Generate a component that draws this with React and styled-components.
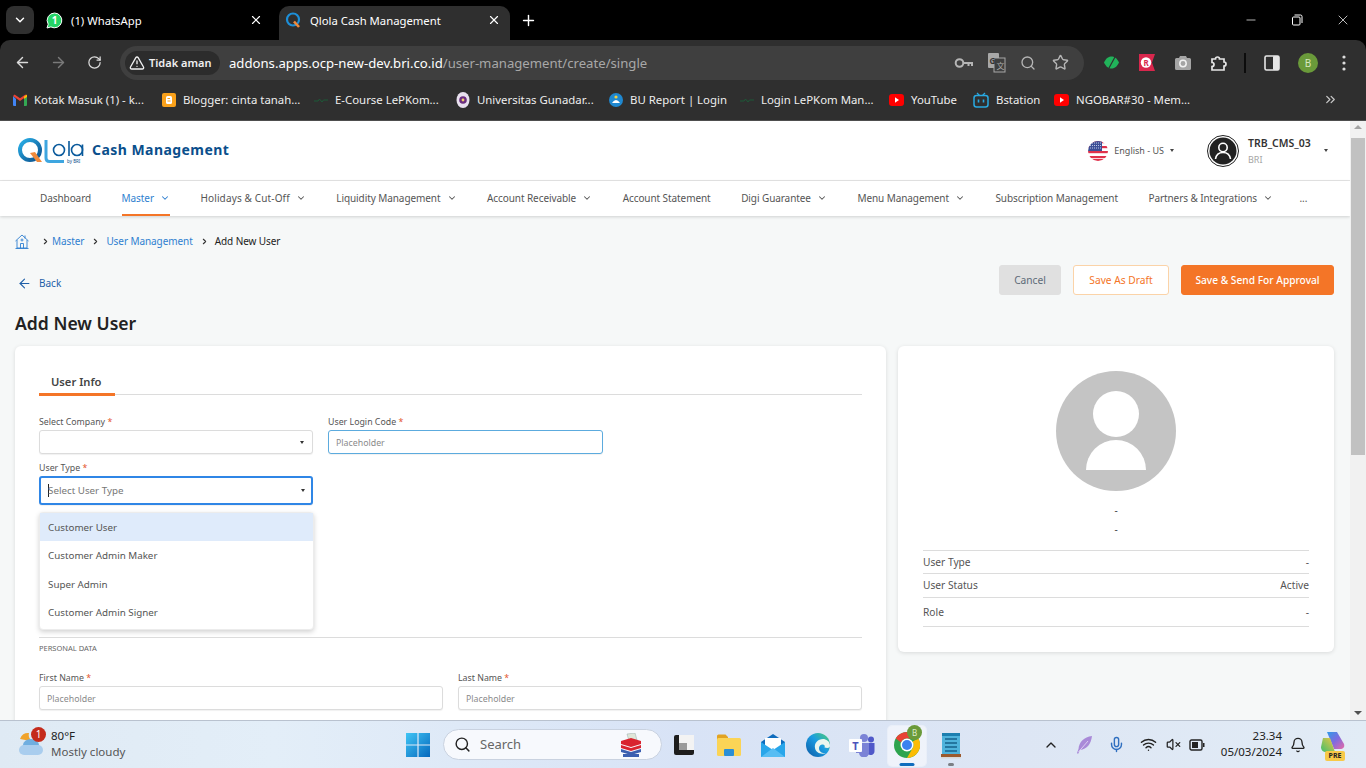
import React from 'react';
import styled, { createGlobalStyle } from 'styled-components';
import {
  ArrowLeft,
  ArrowRight,
  RotateCw,
  TriangleAlert,
  Search,
  Star,
  Plus,
  X,
  ChevronDown,
  ChevronRight,
  ChevronUp,
  ChevronsRight,
  Minus,
  Mic,
  Wifi,
  VolumeX,
  Bell,
} from 'lucide-react';

const GlobalStyle = createGlobalStyle`
  html, body {
    margin: 0;
    padding: 0;
    height: 100%;
    overflow: hidden;
    font-family: "Noto Sans", "Open Sans", sans-serif;
  }
  * { box-sizing: border-box; }
`;

const Screen = styled.div`
  width: 1366px;
  height: 768px;
  display: flex;
  flex-direction: column;
  overflow: hidden;
  background: #000;
`;

/* browser chrome */
const TabStrip = styled.div`
  height: 40px;
  background: #000;
  display: flex;
  align-items: flex-end;
  padding-left: 6px;
  color: #fff;
`;

const TabSearch = styled.div`
  width: 28px;
  height: 28px;
  margin-bottom: 6px;
  border-radius: 8px;
  background: #303030;
  display: flex;
  align-items: center;
  justify-content: center;
`;

const Tab = styled.div`
  width: ${(p) => p.$width}px;
  height: 34px;
  margin-left: ${(p) => p.$left}px;
  border-radius: 10px 10px 0 0;
  background: ${(p) => (p.$active ? '#2f2f2f' : 'transparent')};
  display: flex;
  align-items: center;
  padding: 0 ${(p) => p.$right}px 6px ${(p) => p.$pad}px;
  gap: 8px;
  font-size: 11.3px;
`;

const TabTitle = styled.span`
  flex: 1;
  white-space: nowrap;
`;

const NewTab = styled.div`
  width: 36px;
  height: 34px;
  display: flex;
  align-items: center;
  justify-content: center;
  padding-bottom: 6px;
`;

const WindowControls = styled.div`
  margin-left: auto;
  height: 40px;
  display: flex;
  align-items: center;
`;

const WindowButton = styled.div`
  width: 46px;
  display: flex;
  justify-content: center;
`;

const Toolbar = styled.div`
  height: 45px;
  background: #2f2f2f;
  border-radius: 10px 10px 0 0;
  display: flex;
  align-items: center;
  position: relative;
  padding-left: 4px;
  color: #e3e3e3;
`;

const NavIcon = styled.div`
  width: 36px;
  display: flex;
  justify-content: center;
  color: ${(p) => (p.$muted ? '#7a7a7a' : '#dcdcdc')};
`;

const Omnibox = styled.div`
  margin-left: 8px;
  width: 964px;
  height: 34px;
  border-radius: 17px;
  background: #3f3f3f;
  display: flex;
  align-items: center;
  padding: 0 15px 0 5px;
`;

const SecurityChip = styled.div`
  height: 24px;
  width: 95px;
  border-radius: 12px;
  background: #2c2c2c;
  display: flex;
  align-items: center;
  gap: 4px;
  padding-left: 4px;
  font-size: 11px;
  font-weight: 600;
  color: #f0f0f0;
  white-space: nowrap;
`;

const Url = styled.div`
  margin-left: 9px;
  padding-top: 1px;
  font-size: 13.15px;
  color: #fff;
  white-space: nowrap;
  span {
    color: #a8a8a8;
  }
`;

const OmniIcons = styled.div`
  margin-left: auto;
  display: flex;
  align-items: center;
  gap: 14px;
  color: #b5b5b5;
  svg:last-child {
    margin-left: 2px;
  }
`;

const Extensions = styled.div`
  margin-left: 9px;
  display: flex;
  align-items: center;
`;

const ExtSlot = styled.div`
  width: ${(p) => p.$width || 36}px;
  display: flex;
  justify-content: center;
  align-items: center;
  color: #c9c9c9;
`;

const ToolSep = styled.div`
  width: 2px;
  height: 20px;
  margin: 0 8px 0 7px;
  background: #0c0c0c;
`;

const Profile = styled.div`
  width: 20px;
  height: 20px;
  border-radius: 50%;
  background: #6a9a3a;
  color: #d8e8c0;
  font-size: 10px;
  display: flex;
  align-items: center;
  justify-content: center;
`;

const BookmarkBar = styled.div`
  height: 36px;
  background: #2f2f2f;
  border-bottom: 1px solid #4e4e4e;
  display: flex;
  align-items: center;
  padding: 0 0 6px 13px;
  color: #eee;
  font-size: 11.4px;
`;

const Bookmark = styled.div`
  width: ${(p) => p.$width}px;
  flex: none;
  display: flex;
  align-items: center;
  gap: 7px;
  white-space: nowrap;
`;

const BookmarkMore = styled.div`
  margin-left: auto;
  margin-right: 28px;
  display: flex;
  color: #c8c8c8;
`;

/* page */
const Viewport = styled.div`
  flex: 1;
  min-height: 0;
  display: flex;
  overflow: hidden;
`;

const Page = styled.div`
  width: 1350px;
  background: #f6f8f8;
  overflow: hidden;
  color: #333;
`;

const Scrollbar = styled.div`
  width: 16px;
  background: #f1f1f1;
  display: flex;
  flex-direction: column;
  align-items: center;
  padding-top: 4px;
`;

const ScrollArrow = styled.div`
  width: 0;
  height: 0;
  border-left: 4px solid transparent;
  border-right: 4px solid transparent;
  ${(p) =>
    p.$down
      ? 'border-top: 4px solid #505050; margin-top: auto; margin-bottom: 5px;'
      : 'border-bottom: 4px solid #a3a3a3;'}
`;

const ScrollThumb = styled.div`
  width: 14px;
  height: 317px;
  margin-top: 9px;
  background: #c1c1c1;
`;

const Header = styled.header`
  height: 60px;
  background: #fff;
  border-bottom: 1px solid #e6e6e6;
  display: flex;
  align-items: center;
  padding-left: 17px;
`;

const LogoTitle = styled.div`
  margin-left: 8px;
  padding-bottom: 2px;
  font-size: 14px;
  font-weight: 700;
  letter-spacing: 0.45px;
  color: #0a4f8c;
`;

const LangPick = styled.div`
  margin-left: auto;
  display: flex;
  align-items: center;
  font-size: 9px;
  color: #555;
  gap: 6px;
`;

const Caret = styled.span`
  display: inline-block;
  width: 0;
  height: 0;
  border-left: 2.5px solid transparent;
  border-right: 2.5px solid transparent;
  border-top: 3px solid ${(p) => p.$color || '#444'};
`;

const UserBox = styled.div`
  margin-left: 33px;
  margin-right: 22px;
  display: flex;
  align-items: center;
`;

const UserText = styled.div`
  margin: 0 11px 0 9px;
  width: 65px;
  padding-top: 2px;
`;

const UserName = styled.div`
  font-size: 10.5px;
  font-weight: 600;
  color: #333;
  line-height: 14px;
`;

const UserOrg = styled.div`
  font-size: 9px;
  color: #a5a5a5;
  line-height: 14px;
  margin-top: 3px;
`;

const Nav = styled.nav`
  height: 35px;
  background: #fff;
  box-shadow: 0 1px 3px rgba(0, 0, 0, 0.16);
  display: flex;
  align-items: stretch;
  padding-left: 40px;
  gap: 30.5px;
  position: relative;
`;

const NavItem = styled.div`
  display: flex;
  align-items: center;
  gap: 6px;
  margin-left: ${(p) => p.$pull || 0}px;
  font-size: 10px;
  letter-spacing: ${(p) => p.$spacing ?? -0.08}px;
  white-space: nowrap;
  color: ${(p) => (p.$active ? '#2f7fd0' : '#555')};
  border-bottom: 2px solid ${(p) => (p.$active ? '#f47527' : 'transparent')};
`;

const Content = styled.main`
  padding: 15px 16px 0 15px;
`;

const Breadcrumb = styled.div`
  height: 20px;
  display: flex;
  align-items: center;
  font-size: 10px;
  letter-spacing: -0.08px;
  color: #2f7fd0;
`;

const CrumbSep = styled.span`
  display: flex;
  margin: 0 ${(p) => p.$right}px 0 ${(p) => p.$left}px;
  color: #333;
`;

const CrumbCurrent = styled.span`
  color: #222;
`;

const ActionRow = styled.div`
  margin-top: 14px;
  height: 30px;
  display: flex;
  align-items: center;
`;

const BackLink = styled.div`
  display: flex;
  align-items: center;
  gap: 7px;
  margin-top: 6px;
  padding-left: 2px;
  font-size: 10px;
  color: #1f5fa8;
`;

const Buttons = styled.div`
  margin-left: auto;
  display: flex;
  gap: 12px;
`;

const Button = styled.button`
  width: ${(p) => p.$width}px;
  height: 30px;
  padding: 0;
  border-radius: 3px;
  font-family: inherit;
  font-size: 10.2px;
  font-weight: ${(p) => (p.$variant === 'primary' ? 500 : 400)};
  border: 1px solid
    ${(p) =>
      p.$variant === 'primary'
        ? '#f47527'
        : p.$variant === 'draft'
          ? '#fbd3a8'
          : '#e0e0e0'};
  background: ${(p) =>
    p.$variant === 'primary'
      ? '#f47527'
      : p.$variant === 'draft'
        ? '#fff'
        : '#e0e0e0'};
  color: ${(p) =>
    p.$variant === 'primary'
      ? '#fff'
      : p.$variant === 'draft'
        ? '#f47527'
        : '#5d6b78'};
`;

const Title = styled.h1`
  margin: 17px 0 0;
  font-size: 17.6px;
  line-height: 22px;
  font-weight: 600;
  color: #222;
`;

const Columns = styled.div`
  margin-top: 12px;
  display: grid;
  grid-template-columns: 871px 436px;
  gap: 12px;
  align-items: start;
`;

const Card = styled.section`
  background: #fff;
  border-radius: 6px;
  box-shadow: 0 1px 4px rgba(0, 0, 0, 0.12);
`;

const FormCard = styled(Card)`
  height: 420px;
  padding: 24px 24px 0;
`;

const TabBar = styled.div`
  height: 25px;
  border-bottom: 1px solid #dcdcdc;
`;

const TabLabel = styled.div`
  width: 76px;
  height: 26px;
  border-bottom: 3px solid #f47527;
  padding-left: 12px;
  font-size: 11.2px;
  font-weight: 600;
  line-height: 23px;
  color: #444;
`;

const FieldRow = styled.div`
  display: grid;
  grid-template-columns: ${(p) => p.$cols};
  column-gap: 15px;
  margin-top: ${(p) => p.$top || 0}px;
`;

const Field = styled.div`
  position: relative;
`;

const Label = styled.label`
  display: block;
  height: 12px;
  margin-bottom: 2px;
  font-size: 8.8px;
  line-height: 12px;
  color: #555;
  em {
    font-style: normal;
    color: #e4572e;
  }
`;

const Input = styled.div`
  height: ${(p) => p.$height || 24}px;
  border-radius: 3px;
  border: ${(p) =>
    p.$focus === 'strong'
      ? '2px solid #2f86e6'
      : p.$focus === 'soft'
        ? '1px solid #5cabde'
        : '1px solid #dcdcdc'};
  background: #fff;
  display: flex;
  align-items: center;
  justify-content: space-between;
  padding: ${(p) => (p.$focus === 'strong' ? 0 : 1)}px
    ${(p) => (p.$focus === 'strong' ? 6 : 8)}px 0 7px;
  font-size: 8.8px;
  color: #8a8a8a;
  box-shadow: 0 1px 1px rgba(0, 0, 0, 0.06);
`;

const SelectText = styled.span`
  font-size: 9.8px;
  color: #777;
  display: flex;
  align-items: center;
`;

const TextCaret = styled.i`
  width: 1px;
  height: 13px;
  background: #222;
  margin-right: -1px;
`;

const Dropdown = styled.ul`
  position: absolute;
  z-index: 5;
  top: 50px;
  left: 0;
  width: 275px;
  height: 118px;
  margin: 0;
  padding: 0;
  list-style: none;
  background: #fff;
  border-radius: 4px;
  border: 1px solid #ececec;
  box-shadow: 0 2px 5px rgba(0, 0, 0, 0.18);
`;

const Option = styled.li`
  height: ${(p) => p.$height}px;
  padding-left: 8px;
  display: flex;
  align-items: center;
  font-size: 9.8px;
  color: #555;
  background: ${(p) => (p.$active ? '#dfebfb' : 'transparent')};
`;

const SectionHead = styled.div`
  margin-top: 132px;
  border-top: 1px solid #dcdcdc;
  padding-top: 5px;
  font-size: 7.5px;
  line-height: 10px;
  color: #666;
`;

const SideCard = styled(Card)`
  height: 306px;
  padding: 25px 25px 0;
`;

const AvatarWrap = styled.div`
  display: flex;
  justify-content: center;
`;

const Dash = styled.div`
  text-align: center;
  font-size: 10px;
  line-height: 14px;
  margin-top: ${(p) => p.$top}px;
  color: #444;
`;

const InfoTable = styled.div`
  margin-top: 14px;
  border-top: 1px solid #dcdcdc;
`;

const InfoRow = styled.div`
  height: ${(p) => p.$height}px;
  padding-bottom: ${(p) => p.$lift || 0}px;
  border-bottom: 1px solid #dcdcdc;
  display: flex;
  justify-content: space-between;
  align-items: center;
  font-size: 10.2px;
  color: #555;
`;

/* taskbar */
const Taskbar = styled.footer`
  height: 48px;
  border-top: 1px solid #b9c2cf;
  background: linear-gradient(90deg, #dfeaf4 0%, #e3eef8 20%, #d8e3f6 50%, #dde6f4 75%, #e2ecf6 100%);
  display: flex;
  align-items: center;
  position: relative;
`;

const Weather = styled.div`
  width: 406px;
  padding-left: 18px;
  padding-bottom: 2px;
  display: flex;
  align-items: center;
  gap: 7px;
  font-size: 11.5px;
  line-height: 16px;
  color: #222;
`;

const WeatherIcon = styled.div`
  position: relative;
  width: 26px;
  height: 28px;
`;

const Badge = styled.span`
  position: absolute;
  top: -3px;
  right: -2px;
  width: 15px;
  height: 15px;
  border-radius: 50%;
  background: #c42b1c;
  color: #fff;
  font-size: 10px;
  line-height: 15px;
  text-align: center;
`;

const WeatherMuted = styled.div`
  color: #555;
`;

const SearchPill = styled.div`
  margin-left: 13px;
  width: 219px;
  height: 31px;
  border-radius: 16px;
  background: #f7f9fd;
  border: 1px solid #c9d2e0;
  display: flex;
  align-items: center;
  padding: 0 19px 0 10px;
  gap: 9px;
  font-size: 13px;
  color: #666;
`;

const PillText = styled.span`
  padding-bottom: 2px;
`;

const PillArt = styled.div`
  margin-left: auto;
  display: flex;
`;

const AppSlot = styled.div`
  width: 44.5px;
  height: 44px;
  flex: none;
  display: flex;
  align-items: center;
  justify-content: center;
  position: relative;
  ${(p) =>
    p.$active &&
    `&::before {
      content: '';
      position: absolute;
      left: 3px;
      right: 3px;
      top: 3px;
      bottom: 1px;
      border-radius: 4px;
      background: rgba(255, 255, 255, 0.55);
      box-shadow: 0 0 0 1px rgba(255, 255, 255, 0.4);
    }`}
  svg {
    position: relative;
  }
`;

const RunningMark = styled.i`
  position: absolute;
  bottom: 1px;
  left: 50%;
  transform: translateX(-50%);
  height: 3px;
  width: ${(p) => (p.$active ? 15 : 6)}px;
  border-radius: 2px;
  background: ${(p) => (p.$active ? '#0f6cbd' : '#7b7f85')};
`;

const ChromeBadge = styled.span`
  position: absolute;
  top: 2px;
  right: 7px;
  width: 15px;
  height: 15px;
  border-radius: 50%;
  background: #6a9a3a;
  color: #dfeccb;
  font-size: 8px;
  line-height: 15px;
  text-align: center;
`;

const Tray = styled.div`
  margin-left: auto;
  display: flex;
  align-items: center;
  color: #222;
`;

const TraySlot = styled.div`
  width: ${(p) => p.$width}px;
  display: flex;
  justify-content: center;
  color: ${(p) => p.$color || '#222'};
`;

const Clock = styled.div`
  width: 69px;
  padding-bottom: 2px;
  text-align: right;
  font-size: 11.5px;
  line-height: 16px;
  color: #222;
`;

const CopilotWrap = styled.div`
  position: relative;
  margin: 0 20px 0 6px;
  width: 26px;
  height: 30px;
`;

const PreTag = styled.span`
  position: absolute;
  left: 5px;
  bottom: -1px;
  width: 20px;
  height: 10px;
  border-radius: 2px;
  background: #f7c948;
  color: #222;
  font-size: 7px;
  font-weight: 700;
  line-height: 10px;
  text-align: center;
`;

/* drawn icons */
const WhatsappIcon = () => (
  <svg width="17" height="17" viewBox="0 0 17 17">
    <path d="M8.5 1a7.4 7.4 0 0 0-6.300 11.200L1 16l3.900-1.100A7.400 7.400 0 1 0 8.500 1z" fill="#25d366" stroke="#fff" strokeWidth="1" />
    <text x="8.5" y="12" fontSize="10" fontFamily="Noto Sans" textAnchor="middle" fill="#fff" fontWeight="700">1</text>
  </svg>
);

const QIcon = () => (
  <svg width="17" height="17" viewBox="0 0 17 17" fill="none">
    <circle cx="8" cy="7.5" r="6" stroke="#1d8fd8" strokeWidth="2.2" />
    <path d="M9 9.5l5 5.5" stroke="#f08a3c" strokeWidth="2.6" />
  </svg>
);

const QlolaLogo = () => (
  <svg width="67" height="26" viewBox="0 0 67 26" fill="none">
    <defs>
      <linearGradient id="qg" x1="0" y1="0" x2="1" y2="1">
        <stop offset="0" stopColor="#2ab0e8" />
        <stop offset="1" stopColor="#0a4f8c" />
      </linearGradient>
    </defs>
    <circle cx="13" cy="12" r="10" stroke="url(#qg)" strokeWidth="4" />
    <path d="M29 2v18q0 3.500 3.500 3.500H47" stroke="#3ea6e0" strokeWidth="3" />
    <path d="M13 15l7 9h5l-7-10z" fill="#f08a3c" />
    <circle cx="42" cy="12" r="5.500" stroke="#0a5a9c" strokeWidth="1.600" />
    <path d="M52 3v15" stroke="#0a5a9c" strokeWidth="1.600" />
    <circle cx="60" cy="12" r="5.500" stroke="#0a5a9c" strokeWidth="1.600" />
    <path d="M65.500 6.500V18" stroke="#0a5a9c" strokeWidth="1.600" />
    <text x="50" y="25" fontSize="4.500" fontFamily="Noto Sans" fill="#0a4f8c">by BRI</text>
  </svg>
);

const KeyIcon = () => (
  <svg width="20" height="14" viewBox="0 0 20 14" fill="none" stroke="currentColor" strokeWidth="2">
    <circle cx="5.500" cy="7" r="3.800" />
    <path d="M9.500 7H18v3M14.500 7v3" />
  </svg>
);

const TranslateIcon = () => (
  <svg width="18" height="20" viewBox="0 0 18 20">
    <rect x="0" y="0" width="11" height="15" rx="1" fill="#a8a8a8" />
    <rect x="6" y="5" width="11" height="14" fill="#3f3f3f" stroke="#a8a8a8" />
    <text x="1.500" y="11" fontSize="8" fontWeight="700" fontFamily="Noto Sans" fill="#333">G</text>
    <text x="8.500" y="16" fontSize="8" fontFamily="Noto Sans CJK SC" fill="#a8a8a8">文</text>
  </svg>
);

const LeafIcon = () => (
  <svg width="17" height="15" viewBox="0 0 17 15">
    <path d="M1 7.500C3 3 6 1.500 8.500 1.500S14 3 16 7.500C14 12 11 13.500 8.500 13.500S3 12 1 7.500z" fill="#21b35a" />
    <path d="M6 13L12 2" stroke="#2f2f2f" strokeWidth="1.200" />
  </svg>
);

const RedExtIcon = () => (
  <svg width="16" height="17" viewBox="0 0 16 17">
    <path d="M0 0h16l-3 8.500 3 8.500H0z" fill="#d8274d" />
    <circle cx="7" cy="8.500" r="5.200" fill="#fff" />
    <text x="7" y="11.500" fontSize="8" fontWeight="700" textAnchor="middle" fontFamily="Noto Sans" fill="#d8274d">R</text>
  </svg>
);

const CameraIcon = () => (
  <svg width="16" height="15" viewBox="0 0 16 15">
    <path d="M5 1h6l1 2h2.500A1.500 1.500 0 0 1 16 4.500v9a1.500 1.500 0 0 1-1.500 1.500h-13A1.500 1.500 0 0 1 0 13.500v-9A1.500 1.500 0 0 1 1.500 3H4z" fill="#a5a5a5" />
    <circle cx="8" cy="8.500" r="3.200" fill="none" stroke="#f2f2f2" strokeWidth="1.500" />
  </svg>
);

const PuzzleIcon = () => (
  <svg width="18" height="18" viewBox="0 0 18 18" fill="none" stroke="#e6e6e6" strokeWidth="1.700">
    <path d="M2 5h3.500a2 2 0 1 1 4 0H14v3a2 2 0 1 1 0 4v4H2v-3.500a2 2 0 0 0 0-4z" />
  </svg>
);

const PanelIcon = () => (
  <svg width="16" height="16" viewBox="0 0 16 16">
    <rect x="1" y="1" width="14" height="14" rx="1.500" fill="none" stroke="#e6e6e6" strokeWidth="1.600" />
    <rect x="9" y="1" width="6" height="14" rx="1" fill="#e6e6e6" />
  </svg>
);

const MenuDots = () => (
  <svg width="4" height="16" viewBox="0 0 4 16" fill="#dcdcdc">
    <circle cx="2" cy="2" r="1.600" />
    <circle cx="2" cy="8" r="1.600" />
    <circle cx="2" cy="14" r="1.600" />
  </svg>
);

const GmailIcon = () => (
  <svg width="14" height="12" viewBox="0 0 14 12">
    <path d="M0 2v9a1 1 0 0 0 1 1h2V5z" fill="#4285f4" />
    <path d="M14 2v9a1 1 0 0 1-1 1h-2V5z" fill="#34a853" />
    <path d="M0 2l7 5 7-5-1.600-1.600L7 4.200 1.600.4z" fill="#ea4335" />
    <path d="M11 2.400L14 .6V3l-3 2z" fill="#fbbc04" />
  </svg>
);

const BloggerIcon = () => (
  <svg width="14" height="14" viewBox="0 0 14 14">
    <rect width="14" height="14" rx="2" fill="#f9a11b" />
    <rect x="4" y="3" width="6" height="8" rx="1.500" fill="#fff" />
    <rect x="5.500" y="5" width="2.500" height="1" fill="#f9a11b" />
    <rect x="5.500" y="7.500" width="3" height="1" fill="#f9a11b" />
  </svg>
);

const LepkomIcon = () => (
  <svg width="14" height="6" viewBox="0 0 14 6" fill="none">
    <path d="M0 4h4l1.500-2L8 5l1.500-2H14" stroke="#1d5a38" strokeWidth="1" />
  </svg>
);

const CampusIcon = () => (
  <svg width="14" height="16" viewBox="0 0 14 16">
    <ellipse cx="7" cy="8" rx="6.500" ry="8" fill="#e8e0ee" />
    <circle cx="7" cy="8" r="3.800" fill="#6b2d7f" />
    <circle cx="7" cy="8" r="1.400" fill="#f0d36a" />
  </svg>
);

const TutWuriIcon = () => (
  <svg width="14" height="16" viewBox="0 0 14 16">
    <circle cx="7" cy="8" r="7" fill="#1f88d0" />
    <path d="M3 11q4-6 8 0z" fill="#fff" />
    <circle cx="7" cy="5" r="1.600" fill="#f3d03e" />
  </svg>
);

const YoutubeIcon = () => (
  <svg width="15" height="12" viewBox="0 0 15 12">
    <rect width="15" height="12" rx="3" fill="#f00" />
    <path d="M6 3.300l4 2.700-4 2.700z" fill="#fff" />
  </svg>
);

const BstationIcon = () => (
  <svg width="16" height="16" viewBox="0 0 16 16" fill="none">
    <rect x="1" y="3.500" width="14" height="11.500" rx="2.500" stroke="#29a9e1" strokeWidth="1.500" />
    <path d="M4 1l2.500 2.500M12 1L9.500 3.500" stroke="#29a9e1" strokeWidth="1.300" />
    <path d="M5.500 7.500v3M10.500 7.500v3" stroke="#29a9e1" strokeWidth="1.600" />
  </svg>
);

const FlagIcon = () => (
  <svg width="20" height="20" viewBox="0 0 20 20">
    <defs>
      <clipPath id="flagclip">
        <circle cx="10" cy="10" r="10" />
      </clipPath>
    </defs>
    <g clipPath="url(#flagclip)">
      <rect width="20" height="20" fill="#fff" />
      <rect y="0" width="20" height="2.200" fill="#e0314b" />
      <rect y="5" width="20" height="2.200" fill="#e0314b" />
      <rect y="10" width="20" height="2.200" fill="#e0314b" />
      <rect y="15" width="20" height="2.200" fill="#e0314b" />
      <rect y="18" width="20" height="2" fill="#e0314b" />
      <rect width="14" height="10" fill="#3d4f97" />
      <path d="M2 2h11M2 4.500h11M2 7h11" stroke="#cfd6ee" strokeWidth="0.900" strokeDasharray="1 1" />
    </g>
  </svg>
);

const AccountIcon = () => (
  <svg width="32" height="32" viewBox="0 0 32 32">
    <circle cx="16" cy="16" r="15.500" fill="#fff" stroke="#222" strokeWidth="1" />
    <circle cx="16" cy="16" r="13.500" fill="#222" />
    <circle cx="16" cy="12.500" r="4.200" fill="none" stroke="#fff" strokeWidth="1.600" />
    <path d="M8.500 24q1-6.500 7.500-6.500T23.500 24" fill="none" stroke="#fff" strokeWidth="1.600" />
  </svg>
);

const HomeIcon = () => (
  <svg width="14" height="15" viewBox="0 0 14 15" fill="none" stroke="#2f7fd0" strokeWidth="0.900">
    <path d="M0.500 7L7 1l6.500 6M2 6v8h10V6M0.500 14.500h13" />
    <path d="M5.500 14V9.500h3V14M10 1.500v3" />
    <circle cx="7" cy="6" r="1" />
  </svg>
);

const BigAvatar = () => (
  <svg width="120" height="120" viewBox="0 0 120 120">
    <circle cx="60" cy="60" r="60" fill="#c4c4c4" />
    <circle cx="60" cy="43" r="23" fill="#fff" />
    <path d="M30 99a30 30 0 0 1 60 0z" fill="#fff" />
  </svg>
);

const CloudIcon = () => (
  <svg width="26" height="28" viewBox="0 0 26 28">
    <path d="M2 9a8 8 0 0 1 9-6 7 7 0 0 0 7 9z" fill="#f0a32b" />
    <ellipse cx="13" cy="15" rx="8" ry="6" fill="#6faee0" />
    <rect x="1" y="15" width="24" height="10" rx="5" fill="#a9cdee" />
  </svg>
);

const WinLogo = () => (
  <svg width="24" height="24" viewBox="0 0 24 24">
    <defs>
      <linearGradient id="wing" x1="0" y1="0" x2="1" y2="1">
        <stop offset="0" stopColor="#3fc5f5" />
        <stop offset="1" stopColor="#0668bd" />
      </linearGradient>
    </defs>
    <path d="M0 0h11.400v11.400H0zM12.600 0H24v11.400H12.600zM0 12.600h11.400V24H0zM12.600 12.600H24V24H12.600z" fill="url(#wing)" />
  </svg>
);

const BallotBox = () => (
  <svg width="22" height="24" viewBox="0 0 22 24">
    <path d="M7 1l8-1 2 7-8 1z" fill="#dfe6d8" stroke="#9aa" strokeWidth=".5" />
    <path d="M1 8l10-3 10 3v3l-10 3-10-3z" fill="#d9232e" />
    <path d="M1 12l10 3 10-3v3l-10 3-10-3z" fill="#d9232e" />
    <path d="M1 16l10 3 10-3v3l-10 3-10-3z" fill="#3b5fb0" />
    <path d="M3 21h16v3H3z" fill="#3b5fb0" />
  </svg>
);

const DarkApp = () => (
  <svg width="22" height="22" viewBox="0 0 22 22">
    <rect x="1" y="1" width="20" height="20" rx="2" fill="#1d1d1d" />
    <rect x="6" y="1" width="15" height="15" fill="#f3f3f3" />
    <rect x="6" y="9" width="8" height="7" fill="#9a9a9a" />
  </svg>
);

const FolderIcon = () => (
  <svg width="24" height="24" viewBox="0 0 24 24">
    <path d="M0 3a1.500 1.500 0 0 1 1.500-1.500h7L11 4v3H0z" fill="#e2a322" />
    <rect x="0" y="5" width="24" height="18" rx="1.500" fill="#fbd456" />
    <rect x="7" y="16" width="10" height="7" rx="1" fill="#2b8fd6" />
  </svg>
);

const MailIcon = () => (
  <svg width="24" height="24" viewBox="0 0 24 24">
    <path d="M0 9l12-8 12 8v14H0z" fill="#0f6cbd" />
    <path d="M4 5h16v13H4z" fill="#fff" />
    <path d="M0 9l12 8 12-8v15H0z" fill="#29a6ea" />
    <path d="M0 24l12-9 12 9z" fill="#57bdf3" />
  </svg>
);

const EdgeIcon = () => (
  <svg width="24" height="24" viewBox="0 0 24 24">
    <defs>
      <linearGradient id="edg" x1="0" y1="1" x2="1" y2="0">
        <stop offset="0" stopColor="#0c59a4" />
        <stop offset="0.55" stopColor="#1b9de2" />
        <stop offset="1" stopColor="#51cf6e" />
      </linearGradient>
    </defs>
    <circle cx="12" cy="12" r="12" fill="url(#edg)" />
    <path d="M24 13c0-5-4-7-7-7-5 0-9 4-8 9 .7 4 5 7 11 5-5 .5-7-2-7-5 0-2 2-4 4-3.500 2 .5 2 2 1.500 3 3 1 5.500 .5 5.500-1.500z" fill="#eaf7ef" />
  </svg>
);

const TeamsIcon = () => (
  <svg width="26" height="24" viewBox="0 0 26 24">
    <circle cx="15" cy="5" r="4" fill="#7b83d6" />
    <circle cx="22" cy="6.500" r="3" fill="#5059c9" />
    <path d="M18 10h7.500v8a4 4 0 0 1-7.500 2z" fill="#5059c9" />
    <path d="M7 10h13v9a5 5 0 0 1-10 1H7z" fill="#7b83d6" />
    <rect x="0" y="6" width="13" height="13" rx="1" fill="#fff" />
    <text x="6.500" y="16.500" fontSize="11" fontWeight="700" fontFamily="Noto Sans" textAnchor="middle" fill="#4b53bc">T</text>
  </svg>
);

const ChromeIcon = () => (
  <svg width="26" height="26" viewBox="0 0 26 26">
    <circle cx="13" cy="13" r="13" fill="#2da44e" />
    <path d="M13 0a13 13 0 0 1 11.300 6.500H13A6.500 6.500 0 0 0 7 10.500L1.800 6.500A13 13 0 0 1 13 0z" fill="#e94235" />
    <path d="M24.300 6.500A13 13 0 0 1 13 26l5.700-10A6.500 6.500 0 0 0 18.500 9.500z" fill="#fbbc04" />
    <circle cx="13" cy="13" r="6.500" fill="#fff" />
    <circle cx="13" cy="13" r="5" fill="#3b82f0" />
  </svg>
);

const NotesIcon = () => (
  <svg width="20" height="28" viewBox="0 0 20 28">
    <rect x="1" y="2" width="18" height="21" fill="#4fb3dc" />
    <path d="M1 2h18v3H1z" fill="#1c7fb0" />
    <path d="M4 8h12M4 12h12M4 16h12M4 20h12" stroke="#17638c" strokeWidth="1.500" />
    <rect x="0" y="23" width="20" height="3" fill="#9b5a2e" />
    <rect x="0" y="26" width="20" height="1.500" fill="#d8d8d8" />
  </svg>
);

const FeatherIcon = () => (
  <svg width="16" height="18" viewBox="0 0 16 18">
    <path d="M15 0C7 1 2 6 1.500 13L0 17l1 1 2-4c7-1 11-6 12-14z" fill="#a98ad8" />
    <path d="M1.500 16L11 5" stroke="#e9def8" strokeWidth=".8" />
  </svg>
);

const BatteryIcon = () => (
  <svg width="16" height="12" viewBox="0 0 16 12">
    <rect x="1" y="1" width="12" height="10" rx="1.500" fill="none" stroke="#222" strokeWidth="1.400" />
    <rect x="3" y="3" width="6" height="6" fill="#222" />
    <rect x="14" y="4" width="1.500" height="4" fill="#222" />
  </svg>
);

const CopilotIcon = () => (
  <svg width="26" height="24" viewBox="0 0 26 24">
    <defs>
      <linearGradient id="cop" x1="0" y1="0" x2="1" y2="1">
        <stop offset="0" stopColor="#2f9be8" />
        <stop offset="0.5" stopColor="#7f6be0" />
        <stop offset="1" stopColor="#e86aa5" />
      </linearGradient>
      <linearGradient id="cop2" x1="0" y1="1" x2="1" y2="0">
        <stop offset="0" stopColor="#3fbf6c" />
        <stop offset="1" stopColor="#f5c644" />
      </linearGradient>
    </defs>
    <path d="M7 2h10l7 12c1 3-1 5-4 5h-6z" fill="url(#cop)" />
    <path d="M3 8h7l5 14H6c-3 0-5-2-5-5z" fill="url(#cop2)" />
  </svg>
);

const FieldCaret = () => <Caret $color="#333" />;

const CrumbArrow = () => <ChevronRight size={9} strokeWidth={3} />;

const bookmarks = [
  { icon: <GmailIcon />, label: 'Kotak Masuk (1) - k...', width: 149 },
  { icon: <BloggerIcon />, label: 'Blogger: cinta tanah...', width: 152 },
  { icon: <LepkomIcon />, label: 'E-Course LePKom...', width: 142 },
  { icon: <CampusIcon />, label: 'Universitas Gunadar...', width: 153 },
  { icon: <TutWuriIcon />, label: 'BU Report | Login', width: 131 },
  { icon: <LepkomIcon />, label: 'Login LePKom Man...', width: 149 },
  { icon: <YoutubeIcon />, label: 'YouTube', width: 84 },
  { icon: <BstationIcon />, label: 'Bstation', width: 81 },
  { icon: <YoutubeIcon />, label: 'NGOBAR#30 - Mem...', width: 150 },
];

const navItems = [
  { label: 'Dashboard' },
  { label: 'Master', menu: true, active: true },
  { label: 'Holidays & Cut-Off', menu: true, spacing: 0.14 },
  { label: 'Liquidity Management', menu: true },
  { label: 'Account Receivable', menu: true },
  { label: 'Account Statement' },
  { label: 'Digi Guarantee', menu: true },
  { label: 'Menu Management', menu: true },
  { label: 'Subscription Management' },
  { label: 'Partners & Integrations', menu: true },
  { label: '...', pull: -4 },
];

export default function App() {
  return (
    <Screen>
      <GlobalStyle />
      <TabStrip>
        <TabSearch>
          <ChevronDown size={14} color="#fff" strokeWidth={2.5} />
        </TabSearch>
        <Tab $width={240} $left={4} $pad={8} $right={15}>
          <WhatsappIcon />
          <TabTitle>(1) WhatsApp</TabTitle>
          <X size={14} />
        </Tab>
        <Tab $width={231} $left={1} $pad={6} $right={9} $active>
          <QIcon />
          <TabTitle>Qlola Cash Management</TabTitle>
          <X size={14} />
        </Tab>
        <NewTab>
          <Plus size={17} />
        </NewTab>
        <WindowControls>
          <WindowButton>
            <Minus size={14} strokeWidth={1.2} />
          </WindowButton>
          <WindowButton>
            <svg width="12" height="12" viewBox="0 0 12 12" fill="none" stroke="#fff">
              <rect x="1.500" y="3" width="7.500" height="8" rx="1" />
              <path d="M3.500 1h6a1.500 1.500 0 0 1 1.500 1.500V9" />
            </svg>
          </WindowButton>
          <WindowButton>
            <X size={16} strokeWidth={1.1} />
          </WindowButton>
        </WindowControls>
      </TabStrip>

      <Toolbar>
        <NavIcon>
          <ArrowLeft size={17} strokeWidth={2} />
        </NavIcon>
        <NavIcon $muted>
          <ArrowRight size={17} strokeWidth={2} />
        </NavIcon>
        <NavIcon>
          <RotateCw size={15} strokeWidth={2} />
        </NavIcon>
        <Omnibox>
          <SecurityChip>
            <TriangleAlert size={16} strokeWidth={2} />
            Tidak aman
          </SecurityChip>
          <Url>
            addons.apps.ocp-new-dev.bri.co.id<span>/user-management/create/single</span>
          </Url>
          <OmniIcons>
            <KeyIcon />
            <TranslateIcon />
            <Search size={16} strokeWidth={2} />
            <Star size={17} strokeWidth={2} />
          </OmniIcons>
        </Omnibox>
        <Extensions>
          <ExtSlot>
            <LeafIcon />
          </ExtSlot>
          <ExtSlot>
            <RedExtIcon />
          </ExtSlot>
          <ExtSlot>
            <CameraIcon />
          </ExtSlot>
          <ExtSlot>
            <PuzzleIcon />
          </ExtSlot>
          <ToolSep />
          <ExtSlot>
            <PanelIcon />
          </ExtSlot>
          <ExtSlot>
            <Profile>B</Profile>
          </ExtSlot>
          <ExtSlot>
            <MenuDots />
          </ExtSlot>
        </Extensions>
      </Toolbar>

      <BookmarkBar>
        {bookmarks.map((b) => (
          <Bookmark key={b.label} $width={b.width}>
            {b.icon}
            {b.label}
          </Bookmark>
        ))}
        <BookmarkMore>
          <ChevronsRight size={15} />
        </BookmarkMore>
      </BookmarkBar>

      <Viewport>
        <Page>
          <Header>
            <QlolaLogo />
            <LogoTitle>Cash Management</LogoTitle>
            <LangPick>
              <FlagIcon />
              English - US
              <Caret />
            </LangPick>
            <UserBox>
              <AccountIcon />
              <UserText>
                <UserName>TRB_CMS_03</UserName>
                <UserOrg>BRI</UserOrg>
              </UserText>
              <Caret />
            </UserBox>
          </Header>
          <Nav>
            {navItems.map((item) => (
              <NavItem
                key={item.label}
                $active={item.active}
                $spacing={item.spacing}
                $pull={item.pull}
              >
                {item.label}
                {item.menu && <ChevronDown size={10} strokeWidth={2.5} />}
              </NavItem>
            ))}
          </Nav>

          <Content>
            <Breadcrumb>
              <HomeIcon />
              <CrumbSep $left={12} $right={2}>
                <CrumbArrow />
              </CrumbSep>
              Master
              <CrumbSep $left={7} $right={6}>
                <CrumbArrow />
              </CrumbSep>
              User Management
              <CrumbSep $left={7} $right={6}>
                <CrumbArrow />
              </CrumbSep>
              <CrumbCurrent>Add New User</CrumbCurrent>
            </Breadcrumb>

            <ActionRow>
              <BackLink>
                <ArrowLeft size={15} strokeWidth={1.8} />
                Back
              </BackLink>
              <Buttons>
                <Button $width={62}>Cancel</Button>
                <Button $width={96} $variant="draft">
                  Save As Draft
                </Button>
                <Button $width={153} $variant="primary">
                  Save &amp; Send For Approval
                </Button>
              </Buttons>
            </ActionRow>

            <Title>Add New User</Title>

            <Columns>
              <FormCard>
                <TabBar>
                  <TabLabel>User Info</TabLabel>
                </TabBar>

                <FieldRow $cols="274px 275px" $top={21}>
                  <Field>
                    <Label>
                      Select Company <em>*</em>
                    </Label>
                    <Input>
                      <span />
                      <FieldCaret />
                    </Input>
                  </Field>
                  <Field>
                    <Label>
                      User Login Code <em>*</em>
                    </Label>
                    <Input $focus="soft">Placeholder</Input>
                  </Field>
                </FieldRow>

                <FieldRow $cols="274px 275px" $top={8}>
                  <Field>
                    <Label>
                      User Type <em>*</em>
                    </Label>
                    <Input $focus="strong" $height={29}>
                      <SelectText>
                        <TextCaret />
                        Select User Type
                      </SelectText>
                      <FieldCaret />
                    </Input>
                    <Dropdown>
                      <Option $active $height={28}>Customer User</Option>
                      <Option $height={29}>Customer Admin Maker</Option>
                      <Option $height={28}>Super Admin</Option>
                      <Option $height={29}>Customer Admin Signer</Option>
                    </Dropdown>
                  </Field>
                </FieldRow>

                <SectionHead>PERSONAL DATA</SectionHead>

                <FieldRow $cols="404px 404px" $top={19}>
                  <Field>
                    <Label>
                      First Name <em>*</em>
                    </Label>
                    <Input>Placeholder</Input>
                  </Field>
                  <Field>
                    <Label>
                      Last Name <em>*</em>
                    </Label>
                    <Input>Placeholder</Input>
                  </Field>
                </FieldRow>
              </FormCard>

              <SideCard>
                <AvatarWrap>
                  <BigAvatar />
                </AvatarWrap>
                <Dash $top={12}>-</Dash>
                <Dash $top={5}>-</Dash>
                <InfoTable>
                  <InfoRow $height={23}>
                    <span>User Type</span>
                    <span>-</span>
                  </InfoRow>
                  <InfoRow $height={24} $lift={2}>
                    <span>User Status</span>
                    <span>Active</span>
                  </InfoRow>
                  <InfoRow $height={29}>
                    <span>Role</span>
                    <span>-</span>
                  </InfoRow>
                </InfoTable>
              </SideCard>
            </Columns>
          </Content>
        </Page>
        <Scrollbar>
          <ScrollArrow />
          <ScrollThumb />
          <ScrollArrow $down />
        </Scrollbar>
      </Viewport>

      <Taskbar>
        <Weather>
          <WeatherIcon>
            <CloudIcon />
            <Badge>1</Badge>
          </WeatherIcon>
          <div>
            80°F
            <WeatherMuted>Mostly cloudy</WeatherMuted>
          </div>
        </Weather>
        <WinLogo />
        <SearchPill>
          <Search size={17} strokeWidth={2} color="#222" />
          <PillText>Search</PillText>
          <PillArt>
            <BallotBox />
          </PillArt>
        </SearchPill>
        <AppSlot><DarkApp /></AppSlot>
        <AppSlot><FolderIcon /></AppSlot>
        <AppSlot><MailIcon /></AppSlot>
        <AppSlot><EdgeIcon /></AppSlot>
        <AppSlot><TeamsIcon /></AppSlot>
        <AppSlot $active>
          <ChromeIcon />
          <ChromeBadge>B</ChromeBadge>
          <RunningMark $active />
        </AppSlot>
        <AppSlot>
          <NotesIcon />
          <RunningMark />
        </AppSlot>
        <Tray>
          <TraySlot $width={36}><ChevronUp size={16} /></TraySlot>
          <TraySlot $width={32}><FeatherIcon /></TraySlot>
          <TraySlot $width={30} $color="#2f6fc0"><Mic size={17} /></TraySlot>
          <TraySlot $width={34}><Wifi size={17} /></TraySlot>
          <TraySlot $width={16}><VolumeX size={15} /></TraySlot>
          <TraySlot $width={32}><BatteryIcon /></TraySlot>
          <Clock>
            23.34
            <br />
            05/03/2024
          </Clock>
          <TraySlot $width={32}><Bell size={16} /></TraySlot>
          <CopilotWrap>
            <CopilotIcon />
            <PreTag>PRE</PreTag>
          </CopilotWrap>
        </Tray>
      </Taskbar>
    </Screen>
  );
}
